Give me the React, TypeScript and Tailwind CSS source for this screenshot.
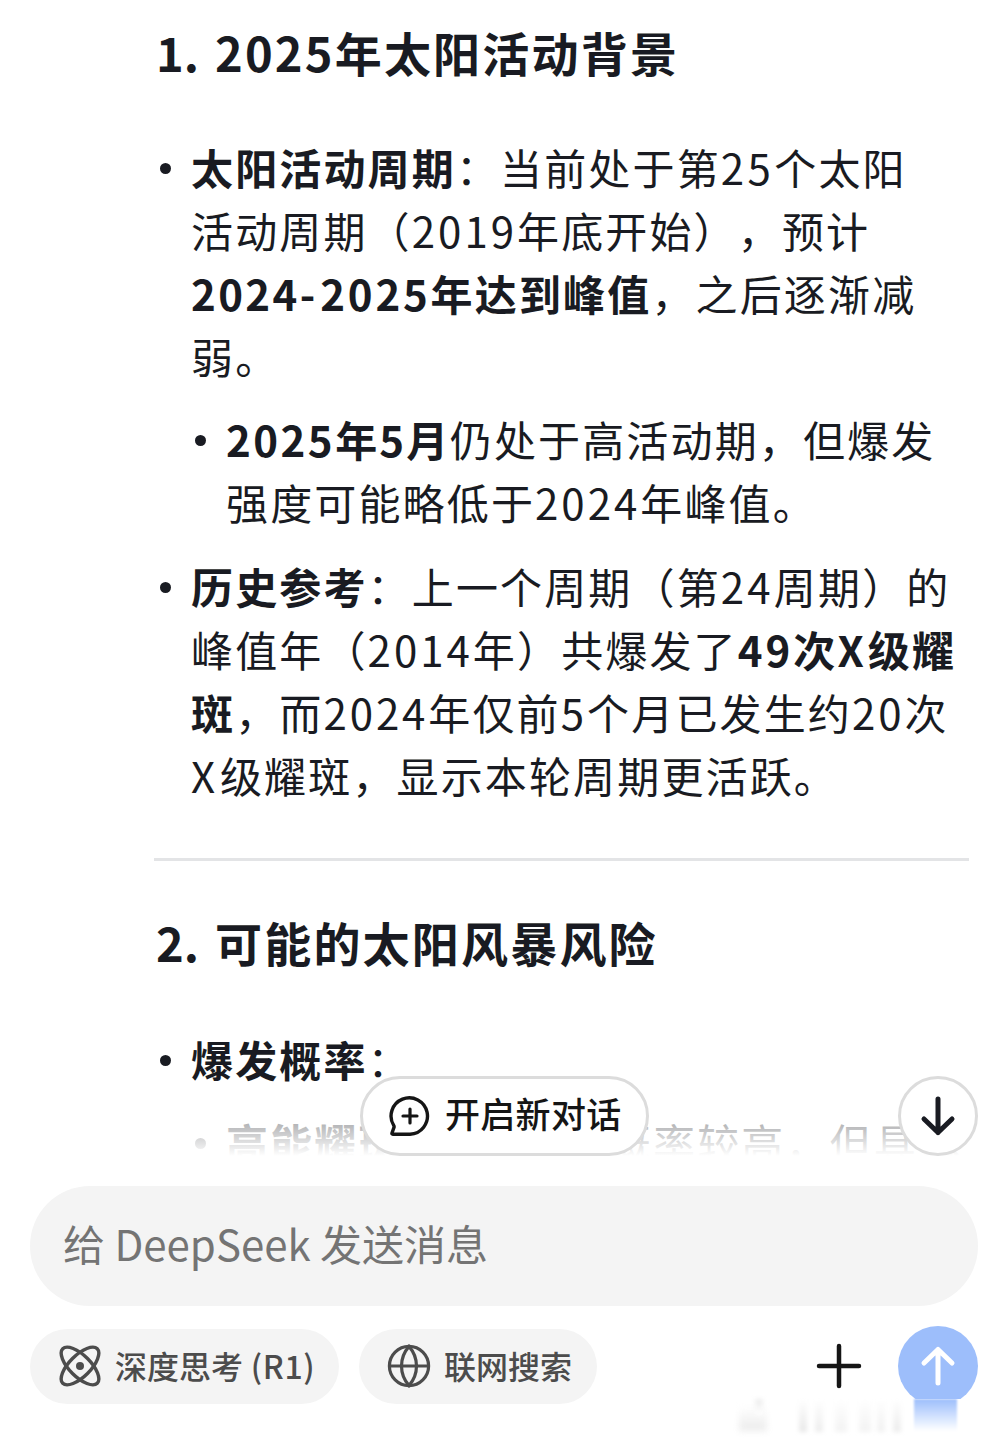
import type { ReactNode } from "react";

type Run = { text: string; bold?: boolean; tracking?: string };

type Item = {
  id: string;
  nested?: boolean;
  lines: Run[][];
};

const background: Item[] = [
  {
    id: "cycle",
    lines: [
      [
        { text: "太阳活动周期", bold: true },
        { text: "：当前处于第" },
        { text: "25", tracking: "tracking-[3.4px]" },
        { text: "个太阳" },
      ],
      [
        { text: "活动周期（" },
        { text: "2019", tracking: "tracking-[3px]" },
        { text: "年底开始），预计" },
      ],
      [
        { text: "2024", bold: true, tracking: "tracking-[2.4px]" },
        { text: "-", bold: true, tracking: "tracking-[5px]" },
        { text: "2025", bold: true, tracking: "tracking-[2.8px]" },
        { text: "年达到峰值", bold: true },
        { text: "，之后逐渐减" },
      ],
      [{ text: "弱。" }],
    ],
  },
  {
    id: "may",
    nested: true,
    lines: [
      [
        { text: "2025", bold: true, tracking: "tracking-[2.5px]" },
        { text: "年", bold: true },
        { text: "5", bold: true },
        { text: "月", bold: true, tracking: "tracking-[1.5px]" },
        { text: "仍处于高活动期，但爆发" },
      ],
      [
        { text: "强度可能略低于" },
        { text: "2024", tracking: "tracking-[3px]" },
        { text: "年峰值。" },
      ],
    ],
  },
  {
    id: "history",
    lines: [
      [
        { text: "历史参考", bold: true },
        { text: "：上一个周期（第" },
        { text: "24", tracking: "tracking-[3.2px]" },
        { text: "周期）的" },
      ],
      [
        { text: "峰值年（" },
        { text: "2014", tracking: "tracking-[3px]" },
        { text: "年）共爆发了" },
        { text: "49", bold: true, tracking: "tracking-[3px]" },
        { text: "次", bold: true },
        { text: "X", bold: true, tracking: "tracking-[4px]" },
        { text: "级耀", bold: true },
      ],
      [
        { text: "斑", bold: true },
        { text: "，而" },
        { text: "2024", tracking: "tracking-[2.9px]" },
        { text: "年仅前" },
        { text: "5", tracking: "tracking-[3px]" },
        { text: "个月已发生约" },
        { text: "20", tracking: "tracking-[3px]" },
        { text: "次" },
      ],
      [
        { text: "X", tracking: "tracking-[4.8px]" },
        { text: "级耀斑，显示本轮周期更活跃。" },
      ],
    ],
  },
];

const risks: Item[] = [
  {
    id: "probability",
    lines: [[{ text: "爆发概率", bold: true }, { text: "：" }]],
  },
  {
    id: "flares",
    nested: true,
    lines: [
      [
        { text: "高能耀斑", bold: true },
        { text: "（X级）", tracking: "tracking-[3px]" },
        { text: "的概率较高，但具体" },
      ],
    ],
  },
];

function BulletList({ items }: { items: Item[] }) {
  return (
    <ul className="flex flex-col gap-5 text-[42px] leading-[63.1px] tracking-[2.15px]">
      {items.map((item) => (
        <li key={item.id} className={item.nested ? "flex pl-[35px]" : "flex"}>
          <span className="mt-[26px] mr-[20px] h-[11px] w-[11px] shrink-0 rounded-full bg-[#191b22]" />
          <p className="-mt-[2px] mb-[2px]">
            {item.lines.map((line, i) => (
              <span key={i} className="block whitespace-nowrap">
                {line.map((run, j) => (
                  <span
                    key={j}
                    className={`${run.bold ? "font-bold" : ""} ${run.tracking ?? ""}`}
                  >
                    {run.text}
                  </span>
                ))}
              </span>
            ))}
          </p>
        </li>
      ))}
    </ul>
  );
}

function Heading({ number, children }: { number: string; children: ReactNode }) {
  return (
    <h3 className="flex h-[70px] pl-[2px] text-[47px] leading-[65px] font-bold tracking-[2.2px] whitespace-nowrap">
      <span className="w-[59px] tracking-normal">{number}</span>
      <span>{children}</span>
    </h3>
  );
}

function NewChatIcon() {
  return (
    <svg width="42" height="42" viewBox="0 0 42 42" fill="none" aria-hidden="true">
      <path
        d="M21 39.2H3.8Q2.6 39.2 3 38L5 32.4Q5.3 31.5 4.8 30.6A18.2 18.2 0 1 1 21 39.2Z"
        stroke="currentColor"
        strokeWidth="3.4"
        strokeLinejoin="round"
      />
      <path d="M21 14V28M14 21H28" stroke="currentColor" strokeWidth="3.2" strokeLinecap="round" />
    </svg>
  );
}

function AtomIcon() {
  return (
    <svg width="44" height="44" viewBox="0 0 44 44" fill="none" aria-hidden="true">
      <ellipse cx="22" cy="22" rx="24.4" ry="10.6" transform="rotate(45 22 22)" stroke="currentColor" strokeWidth="3.4" />
      <ellipse cx="22" cy="22" rx="24.4" ry="10.6" transform="rotate(-45 22 22)" stroke="currentColor" strokeWidth="3.4" />
      <circle cx="22" cy="22" r="4" fill="currentColor" />
    </svg>
  );
}

function GlobeIcon() {
  return (
    <svg width="44" height="44" viewBox="0 0 44 44" fill="none" stroke="currentColor" strokeWidth="3.2" aria-hidden="true">
      <circle cx="22" cy="22" r="19.6" />
      <path d="M2.4 22H41.6" />
      <path d="M22 2.4C12 14 12 30 22 41.6C32 30 32 14 22 2.4Z" />
    </svg>
  );
}

function ArrowIcon({ up = false }: { up?: boolean }) {
  return (
    <svg
      width="40"
      height="44"
      viewBox="0 0 40 44"
      fill="none"
      stroke="currentColor"
      strokeWidth="5"
      strokeLinecap="round"
      strokeLinejoin="round"
      className={up ? "rotate-180" : ""}
      aria-hidden="true"
    >
      <path d="M20 5V38.5M6 25L20 38.5L34 25" />
    </svg>
  );
}

export default function App() {
  return (
    <div className="relative flex h-[1441px] w-[1008px] flex-col overflow-hidden bg-white font-['Noto_Sans_CJK_SC',sans-serif] text-[#191b22] [text-spacing-trim:space-all]">
      {/* Conversation */}
      <main className="relative h-[1156px] shrink-0 overflow-hidden pt-[19px] pr-[39px] pl-[154px]">
        <Heading number="1.">2025年太阳活动背景</Heading>
        <div className="mt-12 pl-[6px]">
          <BulletList items={background} />
        </div>
        <hr className="mt-[50px] border-t-[3px] border-[#e3e4e6]" />
        <div className="mt-[48px]">
          <Heading number="2.">可能的太阳风暴风险</Heading>
        </div>
        <div className="mt-[50px] pl-[6px]">
          <BulletList items={risks} />
        </div>
        <div className="absolute inset-x-0 bottom-0 h-[72px] bg-linear-to-b from-white/0 via-white/60 via-45% to-white" />
      </main>

      {/* Floating actions */}
      <button className="absolute top-[1076px] left-[360px] flex h-20 w-[289px] items-center rounded-full border-[3px] border-[#dcdcdc] bg-white pl-[26px] text-[35px] font-medium text-[#151515]">
        <NewChatIcon />
        <span className="-mt-[5px] ml-[14px] tracking-[0.3px] whitespace-nowrap">开启新对话</span>
      </button>
      <button
        className="absolute top-[1076px] left-[898px] flex h-20 w-20 items-center justify-center rounded-full border-[3px] border-[#dcdcdc] bg-white"
        aria-label="Scroll down"
      >
        <ArrowIcon />
      </button>

      {/* Composer */}
      <footer className="px-[30px] pt-[30px]">
        <div className="flex h-[120px] items-center rounded-full bg-[#f4f4f4] pb-[7px] pl-[33px] text-[42px] text-[#747474]">
          给 DeepSeek 发送消息
        </div>
        <div className="mt-5 flex h-20 items-center text-[32px] text-[#4c4c4c]">
          <button className="flex h-[75px] w-[309px] items-center rounded-full bg-[#f4f4f4] pl-7 font-medium">
            <AtomIcon />
            <span className="-mt-[3px] ml-[13px] whitespace-nowrap">
              深度思考<span className="tracking-[0.6px]"> (R1)</span>
            </span>
          </button>
          <button className="ml-5 flex h-[75px] w-[238px] items-center rounded-full bg-[#f4f4f4] pl-7 font-medium">
            <GlobeIcon />
            <span className="-mt-[3px] ml-[13px] whitespace-nowrap">联网搜索</span>
          </button>
          <button className="ml-auto text-[#151515]" aria-label="Add">
            <svg width="46" height="46" viewBox="0 0 46 46" stroke="currentColor" strokeWidth="4.5" strokeLinecap="round">
              <path d="M23 3V43M3 23H43" />
            </svg>
          </button>
          <button
            className="ml-9 flex h-20 w-20 items-center justify-center rounded-full bg-[#9dbefb] text-white"
            aria-label="Send"
          >
            <ArrowIcon up />
          </button>
        </div>
      </footer>

      {/* Smudge along the bottom edge */}
      <div className="absolute top-[1399px] left-[731px] flex h-[34px] w-[250px] bg-white">
        <div className="mt-2 ml-2 h-6 w-7 bg-linear-to-b from-white to-[#ebebeb] blur-[3px]" />
        <div className="-ml-3 h-4 w-2 bg-linear-to-b from-[#ececec] to-white blur-[2px]" />
        <div className="ml-9 h-[33px] w-2 bg-linear-to-b from-white to-[#e8e8e8] blur-[2px]" />
        <div className="ml-2 h-[33px] w-2 bg-linear-to-b from-white to-[#ededed] blur-[2px]" />
        <div className="ml-3 h-[33px] w-3 bg-linear-to-b from-white to-[#f3f3f3] blur-[2px]" />
        <div className="ml-3 h-[33px] w-3 bg-linear-to-b from-white to-[#f3f3f3] blur-[2px]" />
        <div className="ml-1.5 h-[33px] w-2 bg-linear-to-b from-white to-[#f1f1f1] blur-[2px]" />
        <div className="ml-2 h-[33px] w-2 bg-linear-to-b from-white to-[#ececec] blur-[2px]" />
        <div className="ml-[13px] h-[32px] w-[43px] bg-linear-to-b from-[#9dbefb] to-white blur-[1px]" />
      </div>
    </div>
  );
}
